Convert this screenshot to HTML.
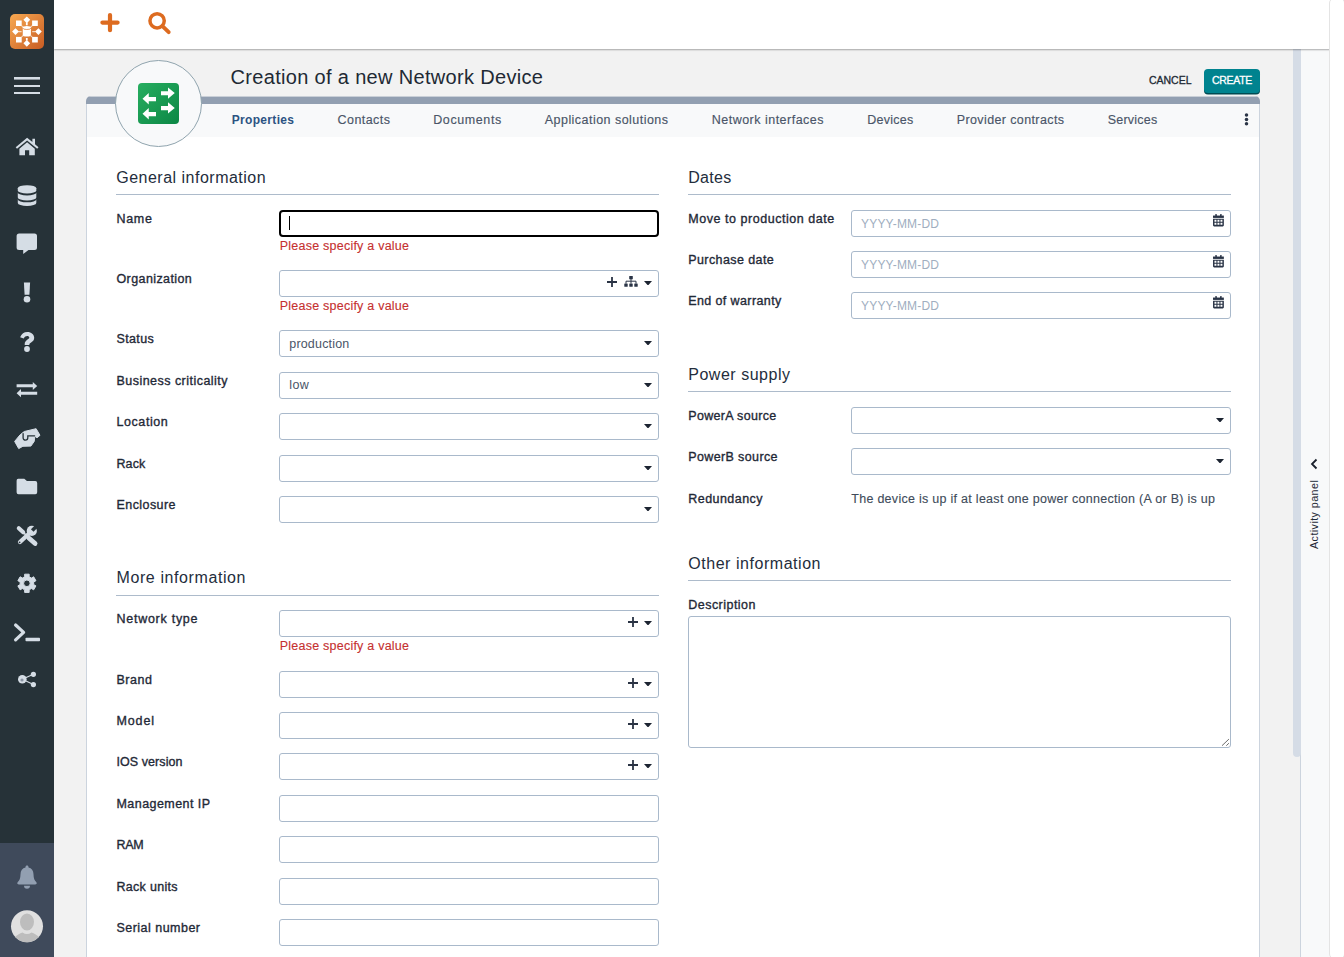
<!DOCTYPE html>
<html><head><meta charset="utf-8"><title>Creation of a new Network Device</title>
<style>
html,body{margin:0;padding:0;width:1344px;height:957px;overflow:hidden}
body{background:#f2f2f2;font-family:"Liberation Sans", sans-serif}
#root{position:absolute;left:0;top:0;width:1344px;height:957px;overflow:hidden;background:#f2f2f2}
.a{position:absolute;display:block}
.t{position:absolute;white-space:nowrap;line-height:1}
.in{position:absolute;box-sizing:border-box;background:#fff;border:1px solid #a9b9cb;border-radius:3px}
.hr{position:absolute;height:1px;background:#adbbcb}
</style></head><body>
<div id='root'>
<!-- page scrollbar -->
<div class='a' style='left:1330px;top:0;width:14px;height:957px;background:#fff'></div>
<!-- activity panel (closed) -->
<div class='a' style='left:1300px;top:49px;width:30px;height:908px;background:#f8f9fa;border-left:1px solid #ccd4de;box-sizing:border-box'></div>
<!-- inner scrollbar thumb -->
<div class='a' style='left:1293px;top:49px;width:8px;height:708px;background:#d5dce6;border-radius:0 0 4px 4px'></div>
<!-- panel -->
<div class='a' style='left:86px;top:96px;width:1174px;height:900px;background:#fff;border-radius:5px 5px 0 0;overflow:hidden'>
  <div style='position:absolute;left:0;top:0;width:1174px;height:8px;background:#929fb1'></div>
  <div style='position:absolute;left:0;top:0;width:1174px;height:1px;background:#c9cfd7'></div>
  <div style='position:absolute;left:0;top:8px;width:1174px;height:32.500px;background:#f8f9fa'></div>
  <div style='position:absolute;left:0;top:8px;width:1px;height:900px;background:#ccd4de'></div>
  <div style='position:absolute;right:0;top:8px;width:1px;height:900px;background:#ccd4de'></div>
</div>
<!-- class circle -->
<div class='a' style='left:115px;top:60px;width:87px;height:87px;box-sizing:border-box;border-radius:50%;background:#f8f9fa;border:1px solid #90a4ae'></div>

<svg class='a' style='left:138px;top:83px' width='41' height='41' viewBox='0 0 41 41'>
<defs><linearGradient id='gg' x1='0' y1='0' x2='1' y2='1'><stop offset='0' stop-color='#27ae60'/><stop offset='1' stop-color='#0c8745'/></linearGradient></defs>
<rect width='41' height='41' rx='4' fill='url(#gg)'/>
<g fill='#fff'>
<path d='M23 8.300h7V4.500l6.750 5.600L30 15.700V12.300h-7z'/>
<path d='M23 23h7v-3.700l6.750 5.600L30 30.600V27.200h-7z'/>
<path d='M18 13.900h-7.250V10L4.500 15.700l6.250 5.700v-3.200H18z'/>
<path d='M18 28.900h-7.250V25L4.500 30.700l6.250 5.700v-3.200H18z'/>
</g></svg>

<!-- top bar -->
<div class='a' style='left:54px;top:0;width:1276px;height:49px;background:#fff;box-shadow:0 1px 1.500px rgba(0,0,0,.320)'></div>

<svg class='a' style='left:98px;top:10px' width='80' height='28' viewBox='98 10 80 28'>
<path d='M110 15v15.200M102.400 22.600h15.200' stroke='#dd6b20' stroke-width='4.200' stroke-linecap='round' fill='none'/>
<circle cx='157.100' cy='20.800' r='7.150' stroke='#dd6b20' stroke-width='3.500' fill='none'/>
<path d='M162.700 26.400l6 5.800' stroke='#dd6b20' stroke-width='3.900' stroke-linecap='round' fill='none'/>
</svg>


<svg class='a' style='left:0;top:0' width='54' height='957' viewBox='0 0 54 957'>
<defs><linearGradient id='lg' x1='0' y1='0' x2='1' y2='1'><stop offset='0' stop-color='#f7a951'/><stop offset='1' stop-color='#c85c23'/></linearGradient></defs>
<rect width='54' height='957' fill='#263238'/>
<rect y='843' width='54' height='114' fill='#3f4a5b'/>
<!-- logo -->
<rect x='10' y='14' width='34' height='35' rx='5' fill='url(#lg)'/>
<g stroke='#fff' fill='none'>
<path d='M26.800 22.400V25.200M26.800 38V40.500' stroke-width='1.800'/>
<path d='M18.400 31.600H21.600M32.200 31.600H35.300' stroke-width='1.300' stroke-opacity='.7'/>
<path d='M21.500 25.700L23.200 27.400M32.200 25.700L30.500 27.400M21.500 37.100L23.200 35.500M32.200 37.100L30.500 35.500' stroke-width='1.100' stroke-opacity='.65'/>
</g>
<g fill='#fff'>
<path d='M26.800 16.400l3.400 3.400-3.400 3.400-3.400-3.400zM26.800 39.900l3.400 3.400-3.400 3.400-3.400-3.400zM15.500 28.200l3.400 3.400-3.400 3.400-3.400-3.400zM38.400 28.200l3.400 3.400-3.400 3.400-3.400-3.400z'/>
<rect x='16' y='20.500' width='5.700' height='5.500'/><rect x='32.100' y='20.500' width='5.700' height='5.500'/>
<rect x='16' y='36.900' width='5.700' height='5.600'/><rect x='32.100' y='36.900' width='5.700' height='5.600'/>
<path d='M22.750 27.500a4.070 1.500 0 0 1 8.150 0v7.500a4.070 1.500 0 0 1-8.150 0z'/>
</g>
<path d='M22.750 28a4.070 1.500 0 0 0 8.150 0' stroke='#e0803a' stroke-width='.8' fill='none'/>
<!-- hamburger -->
<g fill='#d5dde5'><rect x='14' y='77' width='26' height='2.6'/><rect x='14' y='85' width='26' height='2'/><rect x='14' y='92' width='26' height='2'/></g>
<g fill='#d5dde5'>
<!-- home -->
<path d='M27.1 137.7l-11.4 9.5 1.3 1.6 10.1-8.4 10.1 8.4 1.3-1.6-3.5-2.9v-5.6h-2.6v3.4z'/>
<path d='M27.1 142.3l-7.7 6.4v6.6h5.6v-5h4.2v5h5.6v-6.6z'/>
<!-- database -->
<path d='M17.8 188.2a9.25 3 0 0 1 18.500 0v2.300a9.25 3 0 0 1-18.500 0z'/>
<path d='M17.8 192.400a9.25 3 0 0 0 18.500 0v5a9.25 3 0 0 1-18.500 0z'/>
<path d='M17.8 199.300a9.25 3 0 0 0 18.500 0v3.700a9.25 3 0 0 1-18.500 0z'/>
<!-- comment-alt -->
<path d='M19.1 233.6h15.4a2.5 2.5 0 0 1 2.5 2.5v11.4a2.5 2.5 0 0 1-2.5 2.5h-6l-5.3 4v-4h-4.1a2.5 2.5 0 0 1-2.5-2.5v-11.4a2.5 2.5 0 0 1 2.5-2.5z'/>
<!-- exclamation -->
<path d='M23.9 282.5h6.2l-0.7 12.2h-4.8z'/><circle cx='27' cy='299.3' r='3.3'/>
<!-- question -->
<path d='M20.1 337.2c1.6-3.4 3.8-5.3 7.3-5.3 3.8 0 6.8 2.6 6.8 5.9 0 4.6-4.9 4.6-4.9 7v.3h-4.6v-.6c0-4.6 4.6-5 4.6-6.900 0-1-1-1.600-2.100-1.600-1.500 0-2.400.8-3.500 2.400z'/>
<circle cx='27' cy='349' r='2.900'/>
<!-- exchange -->
<path d='M16.6 384.300h16.200v-2.400l4.400 4-4.400 4v-2.700h-16.200zM37.200 391.800h-16.200v-2.700l-4.400 4.100 4.400 4.100v-2.600h16.200z'/>
<!-- hands-helping (approx) -->
<path d='M14.650 441.400L20.100 434.800L24.300 431.500L36.100 428.700L40 435.300L37 437.800L34.900 436.200L34.200 441.400L30.900 446.100L22.900 446.300L18.700 448.600z' stroke='#d5dde5' stroke-width='1' stroke-linejoin='round'/>
<path d='M23.100 433.600V437.800a2.350 2.350 0 0 0 4.700 0V435.800H34.600' stroke='#263238' stroke-width='1.300' fill='none' stroke-linecap='round'/>
<!-- folder -->
<path d='M18.200 478.800h6.100l2.600 2.200h8.400a1.900 1.900 0 0 1 1.900 1.900v9.400a1.900 1.900 0 0 1-1.900 1.900h-16.800a1.900 1.900 0 0 1-1.900-1.900v-11.600a1.900 1.900 0 0 1 1.600-1.900z'/>
<!-- cog -->
<path fill-rule='evenodd' stroke-linejoin='round' stroke='#d5dde5' stroke-width='1' d='M29.15 576.78L29.17 574.18L24.63 574.18L24.65 576.78L22.37 578.09L20.14 576.77L17.86 580.71L20.13 581.98L20.13 584.62L17.86 585.89L20.14 589.83L22.37 588.51L24.65 589.82L24.63 592.42L29.17 592.42L29.15 589.82L31.43 588.51L33.66 589.83L35.94 585.89L33.67 584.62L33.67 581.98L35.94 580.71L33.66 576.77L31.43 578.09zM26.9 580.0a3.3 3.3 0 1 0 0 6.6a3.3 3.3 0 0 0 0 -6.6z'/>
<!-- terminal underscore -->
<rect x='25.500' y='637.800' width='14.500' height='3.400' rx='.8'/>
</g>
<!-- tools -->
<g stroke='#d5dde5' stroke-linecap='round' fill='none'>
<path d='M31 531.700L20 542' stroke-width='4.200'/>
<path d='M18.800 528.200l4.400 4.100' stroke-width='4.100'/>
<path d='M23.500 532.600l5 4.800' stroke-width='1.600'/>
<path d='M28.800 537.900l6.300 5.700' stroke-width='4.700'/>
</g>
<circle cx='31.800' cy='530.900' r='5.100' fill='#d5dde5'/>
<path d='M33.500 531.750L30.950 529.200L35.480 524.680L38.020 527.220z' fill='#263238'/>
<circle cx='19.600' cy='542.300' r='.900' fill='#263238'/>
<!-- terminal chevron -->
<path d='M15.600 625l8 7.400-8 7.400' stroke='#d5dde5' stroke-width='3.200' stroke-linecap='round' stroke-linejoin='round' fill='none'/>
<!-- share -->
<g fill='#d5dde5' stroke='#d5dde5'><circle cx='22.300' cy='679.300' r='4.300' stroke='none'/><circle cx='33.400' cy='674.300' r='2.600' stroke='none'/><circle cx='33.400' cy='684.600' r='2.600' stroke='none'/>
<path d='M22.300 679.300L33.400 674.300M22.300 679.300L33.400 684.600' stroke-width='1.100' fill='none'/></g>
<circle cx='22' cy='680' r='1.600' fill='#8a94a3'/>
<!-- bell -->
<path d='M27 865.600c.9 0 1.500.6 1.500 1.500v.5c3.100.7 5 3.300 5 6.600 0 4.300 1.200 6.300 2.700 7.700.6.600.7 1.300.4 1.900-.3.500-.9.800-1.600.8h-16c-.7 0-1.300-.3-1.600-.8-.3-.6-.2-1.300.4-1.900 1.500-1.400 2.700-3.400 2.700-7.700 0-3.300 1.900-5.900 5-6.600v-.5c0-.9.600-1.500 1.500-1.500z' fill='#929fb1'/>
<path d='M24 885.800h6a3 3 0 0 1-6 0z' fill='#929fb1'/>
<!-- avatar -->
<clipPath id='av'><circle cx='27' cy='926.300' r='16'/></clipPath>
<circle cx='27' cy='926.300' r='16' fill='#e0e0e0'/>
<g clip-path='url(#av)' fill='#bdbdbd'><ellipse cx='27' cy='922' rx='7' ry='8.600'/><path d='M13 943c0-7 6-9 9.500-10.500 3 2 6 2 9 0C35 934 41 936 41 943z'/></g>
</svg>

<div class='a' style='left:1329px;top:-2px;width:16px;height:961px;box-sizing:border-box;border:1px solid #e4e4e4;border-radius:5px;background:#fff'></div>
<!-- buttons -->
<div class='a' style='left:1204px;top:69px;width:56px;height:24px;background:#00838f;border-radius:4px;box-shadow:0 1.500px 0 #004b53'></div>
<svg class='a' style='left:1243.500px;top:113px' width='5' height='13' viewBox='0 0 5 13'><circle cx='2.500' cy='2' r='1.750' fill='#2a3446'/><circle cx='2.500' cy='6.400' r='1.750' fill='#2a3446'/><circle cx='2.500' cy='10.800' r='1.750' fill='#2a3446'/></svg><svg class='a' style='left:1310px;top:458px' width='8' height='12' viewBox='0 0 8 12'><path d='M6.500 1.500L2 6l4.500 4.500' stroke='#1a202c' stroke-width='1.800' fill='none'/></svg>
<!-- section rules -->
<div class='hr' style='left:116px;top:194px;width:543px'></div>
<div class='hr' style='left:688px;top:194px;width:543px'></div>
<div class='hr' style='left:688px;top:391px;width:543px'></div>
<div class='hr' style='left:116px;top:595px;width:543px'></div>
<div class='hr' style='left:688px;top:580px;width:543px'></div>
<div class='in' style='left:279px;top:270px;width:380px;height:27px;'></div><div class='in' style='left:279px;top:330px;width:380px;height:27px;'></div><div class='in' style='left:279px;top:372px;width:380px;height:27px;'></div><div class='in' style='left:279px;top:413px;width:380px;height:27px;'></div><div class='in' style='left:279px;top:455px;width:380px;height:27px;'></div><div class='in' style='left:279px;top:496px;width:380px;height:27px;'></div><div class='in' style='left:279px;top:610px;width:380px;height:27px;'></div><div class='in' style='left:279px;top:671px;width:380px;height:27px;'></div><div class='in' style='left:279px;top:712px;width:380px;height:27px;'></div><div class='in' style='left:279px;top:753px;width:380px;height:27px;'></div><div class='in' style='left:279px;top:795px;width:380px;height:27px;'></div><div class='in' style='left:279px;top:836px;width:380px;height:27px;'></div><div class='in' style='left:279px;top:878px;width:380px;height:27px;'></div><div class='in' style='left:279px;top:919px;width:380px;height:27px;'></div><div class='in' style='left:279px;top:210px;width:380px;height:27px;border:2px solid #000;border-radius:4px'></div><div style='position:absolute;left:289px;top:216px;width:1px;height:14px;background:#000'></div><div class='in' style='left:851px;top:210px;width:380px;height:27px;'></div><div class='in' style='left:851px;top:251px;width:380px;height:27px;'></div><div class='in' style='left:851px;top:292px;width:380px;height:27px;'></div><div class='in' style='left:851px;top:407px;width:380px;height:27px;'></div><div class='in' style='left:851px;top:448px;width:380px;height:27px;'></div><div class='in' style='left:688px;top:616px;width:543px;height:132px;'></div>
<svg class='a' style='left:644px;top:280.5px' width='8' height='4.6' viewBox='0 0 8 4.6'><path d='M0 0H8L4 4.6Z' fill='#1c2431'/></svg><svg class='a' style='left:644px;top:340.5px' width='8' height='4.6' viewBox='0 0 8 4.6'><path d='M0 0H8L4 4.6Z' fill='#1c2431'/></svg><svg class='a' style='left:644px;top:382.5px' width='8' height='4.6' viewBox='0 0 8 4.6'><path d='M0 0H8L4 4.6Z' fill='#1c2431'/></svg><svg class='a' style='left:644px;top:423.5px' width='8' height='4.6' viewBox='0 0 8 4.6'><path d='M0 0H8L4 4.6Z' fill='#1c2431'/></svg><svg class='a' style='left:644px;top:465.5px' width='8' height='4.6' viewBox='0 0 8 4.6'><path d='M0 0H8L4 4.6Z' fill='#1c2431'/></svg><svg class='a' style='left:644px;top:506.5px' width='8' height='4.6' viewBox='0 0 8 4.6'><path d='M0 0H8L4 4.6Z' fill='#1c2431'/></svg><svg class='a' style='left:644px;top:620.5px' width='8' height='4.6' viewBox='0 0 8 4.6'><path d='M0 0H8L4 4.6Z' fill='#1c2431'/></svg><svg class='a' style='left:644px;top:681.5px' width='8' height='4.6' viewBox='0 0 8 4.6'><path d='M0 0H8L4 4.6Z' fill='#1c2431'/></svg><svg class='a' style='left:644px;top:722.5px' width='8' height='4.6' viewBox='0 0 8 4.6'><path d='M0 0H8L4 4.6Z' fill='#1c2431'/></svg><svg class='a' style='left:644px;top:763.5px' width='8' height='4.6' viewBox='0 0 8 4.6'><path d='M0 0H8L4 4.6Z' fill='#1c2431'/></svg><svg class='a' style='left:1216px;top:417.5px' width='8' height='4.6' viewBox='0 0 8 4.6'><path d='M0 0H8L4 4.6Z' fill='#1c2431'/></svg><svg class='a' style='left:1216px;top:458.5px' width='8' height='4.6' viewBox='0 0 8 4.6'><path d='M0 0H8L4 4.6Z' fill='#1c2431'/></svg><svg class='a' style='left:607px;top:277px' width='10' height='10' viewBox='0 0 10 10'><path d='M4.100 0h1.800v4.100h4.100v1.800h-4.100v4.100h-1.800v-4.100h-4.100v-1.800h4.100z' fill='#2a3344'/></svg><svg class='a' style='left:624px;top:276.4px' width='14' height='11' viewBox='0 0 14 11'><rect x='5.2' y='0' width='3.6' height='3.2' rx='.5' fill='#2a3446'/><rect x='0.3' y='7.4' width='3.4' height='3.4' rx='.5' fill='#2a3446'/><rect x='5.3' y='7.4' width='3.4' height='3.4' rx='.5' fill='#2a3446'/><rect x='10.3' y='7.4' width='3.4' height='3.4' rx='.5' fill='#2a3446'/><path d='M7 3v4.5M2 7.5V5.2H12V7.5' stroke='#2a3446' stroke-width='1' fill='none'/></svg><svg class='a' style='left:627.9px;top:617px' width='10' height='10' viewBox='0 0 10 10'><path d='M4.100 0h1.800v4.100h4.100v1.800h-4.100v4.100h-1.800v-4.100h-4.100v-1.800h4.100z' fill='#2a3344'/></svg><svg class='a' style='left:627.9px;top:678px' width='10' height='10' viewBox='0 0 10 10'><path d='M4.100 0h1.800v4.100h4.100v1.800h-4.100v4.100h-1.800v-4.100h-4.100v-1.800h4.100z' fill='#2a3344'/></svg><svg class='a' style='left:627.9px;top:719px' width='10' height='10' viewBox='0 0 10 10'><path d='M4.100 0h1.800v4.100h4.100v1.800h-4.100v4.100h-1.800v-4.100h-4.100v-1.800h4.100z' fill='#2a3344'/></svg><svg class='a' style='left:627.9px;top:760px' width='10' height='10' viewBox='0 0 10 10'><path d='M4.100 0h1.800v4.100h4.100v1.800h-4.100v4.100h-1.800v-4.100h-4.100v-1.800h4.100z' fill='#2a3344'/></svg><svg class='a' style='left:1212.7px;top:214.3px' width='10.9' height='12.4' viewBox='0 0 10.5 12'><path d='M0 1.5h10.5v2.3H0z' fill='#2a3446'/><rect x='2.2' y='0' width='1.5' height='2.5' rx='.4' fill='#2a3446'/><rect x='6.8' y='0' width='1.5' height='2.5' rx='.4' fill='#2a3446'/><path fill-rule='evenodd' d='M0 4.5h10.5v6.4a1.1 1.1 0 0 1-1.1 1.1H1.1A1.1 1.1 0 0 1 0 10.9zM1.4 5.6v1.9h1.9V5.6zM4.3 5.6v1.9h1.9V5.6zM7.2 5.6v1.9h1.9V5.6zM1.4 8.5v1.9h1.9V8.5zM4.3 8.5v1.9h1.9V8.5zM7.2 8.5v1.9h1.9V8.5z' fill='#2a3446'/></svg><svg class='a' style='left:1212.7px;top:255.3px' width='10.9' height='12.4' viewBox='0 0 10.5 12'><path d='M0 1.5h10.5v2.3H0z' fill='#2a3446'/><rect x='2.2' y='0' width='1.5' height='2.5' rx='.4' fill='#2a3446'/><rect x='6.8' y='0' width='1.5' height='2.5' rx='.4' fill='#2a3446'/><path fill-rule='evenodd' d='M0 4.5h10.5v6.4a1.1 1.1 0 0 1-1.1 1.1H1.1A1.1 1.1 0 0 1 0 10.9zM1.4 5.6v1.9h1.9V5.6zM4.3 5.6v1.9h1.9V5.6zM7.2 5.6v1.9h1.9V5.6zM1.4 8.5v1.9h1.9V8.5zM4.3 8.5v1.9h1.9V8.5zM7.2 8.5v1.9h1.9V8.5z' fill='#2a3446'/></svg><svg class='a' style='left:1212.7px;top:296.3px' width='10.9' height='12.4' viewBox='0 0 10.5 12'><path d='M0 1.5h10.5v2.3H0z' fill='#2a3446'/><rect x='2.2' y='0' width='1.5' height='2.5' rx='.4' fill='#2a3446'/><rect x='6.8' y='0' width='1.5' height='2.5' rx='.4' fill='#2a3446'/><path fill-rule='evenodd' d='M0 4.5h10.5v6.4a1.1 1.1 0 0 1-1.1 1.1H1.1A1.1 1.1 0 0 1 0 10.9zM1.4 5.6v1.9h1.9V5.6zM4.3 5.6v1.9h1.9V5.6zM7.2 5.6v1.9h1.9V5.6zM1.4 8.5v1.9h1.9V8.5zM4.3 8.5v1.9h1.9V8.5zM7.2 8.5v1.9h1.9V8.5z' fill='#2a3446'/></svg><svg class='a' style='left:1219px;top:736px' width='10' height='10' viewBox='0 0 10 10'><path d='M9.9 3.100L3 9.700M9.900 7.200L7.300 9.700' stroke='#5a5a5a' stroke-width='.900'/></svg>
<span class='t' style='left:230.50px;top:67.00px;font-size:20px;font-weight:400;color:#212934;letter-spacing:0.327px'>Creation of a new Network Device</span>
<span class='t' style='left:231.75px;top:114.00px;font-size:12px;font-weight:700;color:#2c5382;letter-spacing:0.321px'>Properties</span>
<span class='t' style='left:337.50px;top:113.75px;font-size:12.5px;font-weight:400;color:#4a5568;letter-spacing:0.451px;-webkit-text-stroke:0.15px #4a5568'>Contacts</span>
<span class='t' style='left:433.25px;top:113.75px;font-size:12.5px;font-weight:400;color:#4a5568;letter-spacing:0.596px;-webkit-text-stroke:0.15px #4a5568'>Documents</span>
<span class='t' style='left:544.75px;top:113.75px;font-size:12.5px;font-weight:400;color:#4a5568;letter-spacing:0.464px;-webkit-text-stroke:0.15px #4a5568'>Application solutions</span>
<span class='t' style='left:711.75px;top:113.75px;font-size:12.5px;font-weight:400;color:#4a5568;letter-spacing:0.484px;-webkit-text-stroke:0.15px #4a5568'>Network interfaces</span>
<span class='t' style='left:867.25px;top:113.75px;font-size:12.5px;font-weight:400;color:#4a5568;letter-spacing:0.255px;-webkit-text-stroke:0.15px #4a5568'>Devices</span>
<span class='t' style='left:956.75px;top:113.75px;font-size:12.5px;font-weight:400;color:#4a5568;letter-spacing:0.383px;-webkit-text-stroke:0.15px #4a5568'>Provider contracts</span>
<span class='t' style='left:1107.75px;top:113.75px;font-size:12.5px;font-weight:400;color:#4a5568;letter-spacing:0.223px;-webkit-text-stroke:0.15px #4a5568'>Services</span>
<span class='t' style='left:1149.00px;top:74.75px;font-size:10.5px;font-weight:400;color:#212934;letter-spacing:-0.022px;-webkit-text-stroke:0.3px #212934'>CANCEL</span>
<span class='t' style='left:1212.00px;top:74.75px;font-size:10.5px;font-weight:400;color:#ffffff;letter-spacing:-0.312px;-webkit-text-stroke:0.3px #ffffff'>CREATE</span>
<span class='t' style='left:116.25px;top:169.50px;font-size:16px;font-weight:400;color:#242d3c;letter-spacing:0.491px'>General information</span>
<span class='t' style='left:688.25px;top:169.50px;font-size:16px;font-weight:400;color:#242d3c;letter-spacing:0.301px'>Dates</span>
<span class='t' style='left:688.25px;top:366.50px;font-size:16px;font-weight:400;color:#242d3c;letter-spacing:0.518px'>Power supply</span>
<span class='t' style='left:116.50px;top:569.50px;font-size:16px;font-weight:400;color:#242d3c;letter-spacing:0.597px'>More information</span>
<span class='t' style='left:688.25px;top:555.50px;font-size:16px;font-weight:400;color:#242d3c;letter-spacing:0.540px'>Other information</span>
<span class='t' style='left:116.50px;top:212.75px;font-size:12.5px;font-weight:400;color:#1f2937;letter-spacing:0.685px;-webkit-text-stroke:0.35px #1f2937'>Name</span>
<span class='t' style='left:116.50px;top:272.75px;font-size:12.5px;font-weight:400;color:#1f2937;letter-spacing:0.402px;-webkit-text-stroke:0.35px #1f2937'>Organization</span>
<span class='t' style='left:116.50px;top:332.75px;font-size:12.5px;font-weight:400;color:#1f2937;letter-spacing:0.362px;-webkit-text-stroke:0.35px #1f2937'>Status</span>
<span class='t' style='left:116.50px;top:374.75px;font-size:12.5px;font-weight:400;color:#1f2937;letter-spacing:0.467px;-webkit-text-stroke:0.35px #1f2937'>Business criticality</span>
<span class='t' style='left:116.50px;top:415.75px;font-size:12.5px;font-weight:400;color:#1f2937;letter-spacing:0.569px;-webkit-text-stroke:0.35px #1f2937'>Location</span>
<span class='t' style='left:116.50px;top:457.75px;font-size:12.5px;font-weight:400;color:#1f2937;letter-spacing:0.089px;-webkit-text-stroke:0.35px #1f2937'>Rack</span>
<span class='t' style='left:116.50px;top:498.75px;font-size:12.5px;font-weight:400;color:#1f2937;letter-spacing:0.426px;-webkit-text-stroke:0.35px #1f2937'>Enclosure</span>
<span class='t' style='left:116.50px;top:612.75px;font-size:12.5px;font-weight:400;color:#1f2937;letter-spacing:0.732px;-webkit-text-stroke:0.35px #1f2937'>Network type</span>
<span class='t' style='left:116.50px;top:673.75px;font-size:12.5px;font-weight:400;color:#1f2937;letter-spacing:0.535px;-webkit-text-stroke:0.35px #1f2937'>Brand</span>
<span class='t' style='left:116.50px;top:714.75px;font-size:12.5px;font-weight:400;color:#1f2937;letter-spacing:0.863px;-webkit-text-stroke:0.35px #1f2937'>Model</span>
<span class='t' style='left:116.50px;top:755.75px;font-size:12.5px;font-weight:400;color:#1f2937;letter-spacing:0.069px;-webkit-text-stroke:0.35px #1f2937'>IOS version</span>
<span class='t' style='left:116.50px;top:797.75px;font-size:12.5px;font-weight:400;color:#1f2937;letter-spacing:0.438px;-webkit-text-stroke:0.35px #1f2937'>Management IP</span>
<span class='t' style='left:116.50px;top:838.75px;font-size:12.5px;font-weight:400;color:#1f2937;letter-spacing:-0.266px;-webkit-text-stroke:0.35px #1f2937'>RAM</span>
<span class='t' style='left:116.50px;top:880.75px;font-size:12.5px;font-weight:400;color:#1f2937;letter-spacing:0.293px;-webkit-text-stroke:0.35px #1f2937'>Rack units</span>
<span class='t' style='left:116.50px;top:921.75px;font-size:12.5px;font-weight:400;color:#1f2937;letter-spacing:0.473px;-webkit-text-stroke:0.35px #1f2937'>Serial number</span>
<span class='t' style='left:688.25px;top:212.75px;font-size:12.5px;font-weight:400;color:#1f2937;letter-spacing:0.540px;-webkit-text-stroke:0.35px #1f2937'>Move to production date</span>
<span class='t' style='left:688.25px;top:253.75px;font-size:12.5px;font-weight:400;color:#1f2937;letter-spacing:0.408px;-webkit-text-stroke:0.35px #1f2937'>Purchase date</span>
<span class='t' style='left:688.25px;top:294.75px;font-size:12.5px;font-weight:400;color:#1f2937;letter-spacing:0.390px;-webkit-text-stroke:0.35px #1f2937'>End of warranty</span>
<span class='t' style='left:688.25px;top:409.75px;font-size:12.5px;font-weight:400;color:#1f2937;letter-spacing:0.327px;-webkit-text-stroke:0.35px #1f2937'>PowerA source</span>
<span class='t' style='left:688.25px;top:450.75px;font-size:12.5px;font-weight:400;color:#1f2937;letter-spacing:0.374px;-webkit-text-stroke:0.35px #1f2937'>PowerB source</span>
<span class='t' style='left:688.25px;top:492.75px;font-size:12.5px;font-weight:400;color:#1f2937;letter-spacing:0.450px;-webkit-text-stroke:0.35px #1f2937'>Redundancy</span>
<span class='t' style='left:688.25px;top:598.75px;font-size:12.5px;font-weight:400;color:#1f2937;letter-spacing:0.472px;-webkit-text-stroke:0.35px #1f2937'>Description</span>
<span class='t' style='left:289.25px;top:337.75px;font-size:12.5px;font-weight:400;color:#4a5568;letter-spacing:0.181px'>production</span>
<span class='t' style='left:289.25px;top:378.75px;font-size:12.5px;font-weight:400;color:#4a5568;letter-spacing:0.367px'>low</span>
<span class='t' style='left:861.00px;top:218.00px;font-size:12px;font-weight:400;color:#a0aec0;letter-spacing:0.196px'>YYYY-MM-DD</span>
<span class='t' style='left:861.00px;top:259.00px;font-size:12px;font-weight:400;color:#a0aec0;letter-spacing:0.196px'>YYYY-MM-DD</span>
<span class='t' style='left:861.00px;top:300.00px;font-size:12px;font-weight:400;color:#a0aec0;letter-spacing:0.196px'>YYYY-MM-DD</span>
<span class='t' style='left:851.25px;top:492.75px;font-size:12.5px;font-weight:400;color:#404b5a;letter-spacing:0.281px;-webkit-text-stroke:0.12px #404b5a'>The device is up if at least one power connection (A or B) is up</span>
<span class='t' style='left:279.75px;top:239.75px;font-size:12.5px;font-weight:400;color:#c53030;letter-spacing:0.231px;-webkit-text-stroke:0.12px #c53030'>Please specify a value</span>
<span class='t' style='left:279.75px;top:299.75px;font-size:12.5px;font-weight:400;color:#c53030;letter-spacing:0.231px;-webkit-text-stroke:0.12px #c53030'>Please specify a value</span>
<span class='t' style='left:279.75px;top:639.75px;font-size:12.5px;font-weight:400;color:#c53030;letter-spacing:0.231px;-webkit-text-stroke:0.12px #c53030'>Please specify a value</span>
<span class='t' style='left:1309px;top:548.500px;font-size:10.800px;color:#1f2937;transform-origin:0 0;transform:rotate(-90deg);letter-spacing:.400px'>Activity panel</span>
</div>
</body></html>
